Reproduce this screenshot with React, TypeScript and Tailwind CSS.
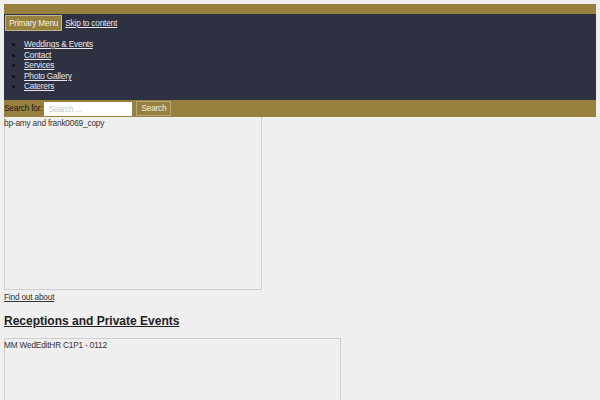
import React from 'react';

const menuItems = ['Weddings & Events', 'Contact', 'Services', 'Photo Gallery', 'Caterers'];

export default function App() {
  return (
    <div className="min-h-[400px] overflow-hidden bg-[#efefef] px-1 pt-1 font-['Liberation_Sans',Arial,sans-serif] text-[8.3px] leading-[11px] tracking-[-0.2px] text-[#333]">
      <div className="h-[10px] bg-[#98803f]" />

      {/* header / navigation */}
      <nav className="h-[86px] bg-[#2d3142] pl-px pt-px text-[#e8e8ee]">
        <div className="flex items-center gap-[3px]">
          <button className="h-4 border border-[#c2b48c] bg-[#98803f] px-[3px] text-[8.3px] leading-none text-[#f4f0e4]">
            Primary Menu
          </button>
          <a href="#" className="underline">Skip to content</a>
        </div>
        <ul className="mt-[8px] list-disc pl-[19px] leading-[10.6px] marker:text-[#111]">
          {menuItems.map((item) => (
            <li key={item}>
              <a href="#" className="underline">{item}</a>
            </li>
          ))}
        </ul>
      </nav>

      {/* search */}
      <form className="flex h-[17px] items-center gap-[2px] bg-[#98803f]">
        <label className="text-[#1a1a1a]">Search for:</label>
        <input
          placeholder="Search ..."
          className="h-[14px] w-[88px] bg-white px-1 text-[8.3px] placeholder:text-[#c8c8c8] focus:outline-none"
        />
        <button className="ml-[2px] h-[15px] border border-[#b8a77a] px-[4px] text-[8.3px] leading-none text-[#f2eee2]">
          Search
        </button>
      </form>

      {/* content */}
      <div className="h-[173px] w-[258px] border border-t-0 border-[#cfcfcf]">
        <p className="-ml-px pt-px">bp-amy and frank0069_copy</p>
      </div>
      <a href="#" className="mt-[2px] block underline">Find out about</a>
      <h2 className="mt-[10px] text-[12px] font-bold leading-[16px] tracking-normal text-[#222] underline">
        Receptions and Private Events
      </h2>
      <div className="mt-[9px] h-[80px] w-[337px] border border-[#cfcfcf]">
        <p className="-ml-px pt-[1px]">MM WedEditHR C1P1 - 0112</p>
      </div>
    </div>
  );
}
